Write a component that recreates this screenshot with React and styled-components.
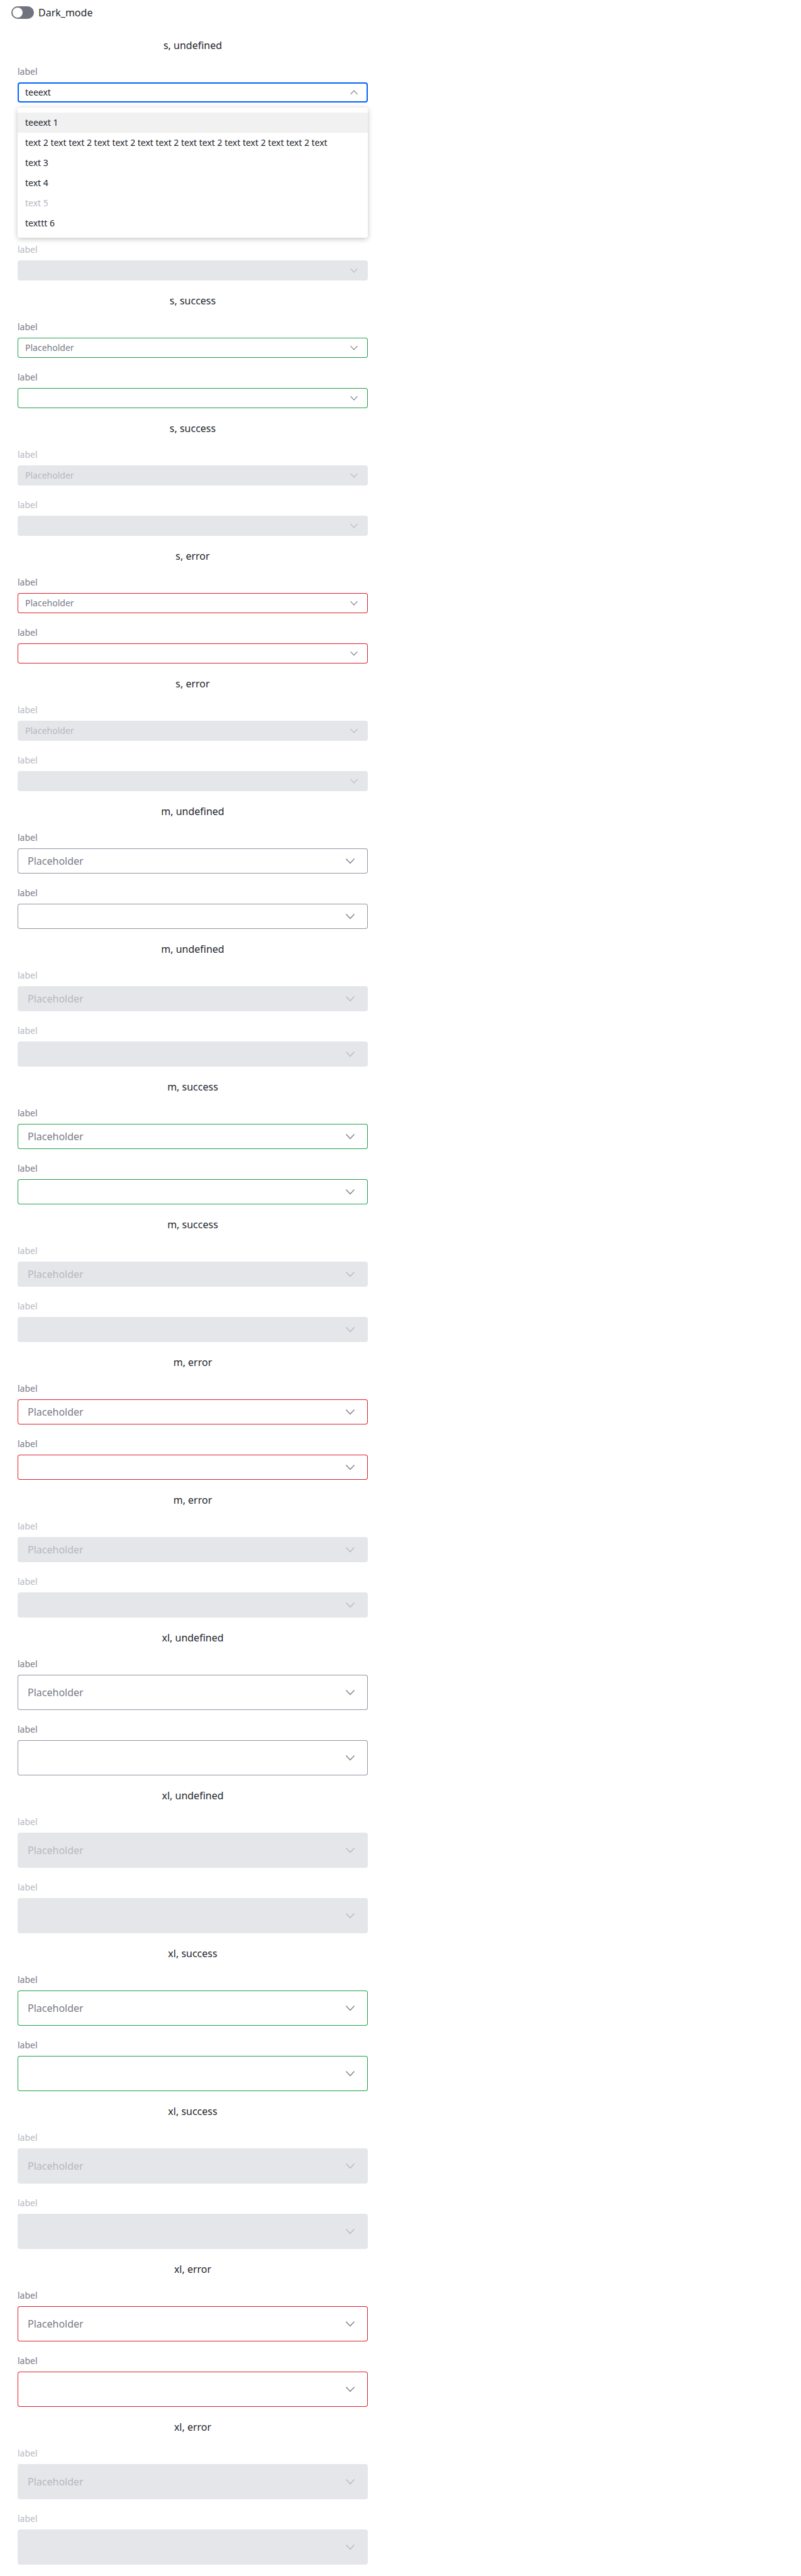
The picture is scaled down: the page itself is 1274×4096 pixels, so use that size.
import React, { useId, useState } from "react";
import styled, { createGlobalStyle, css } from "styled-components";

const fontStack = '"Noto Sans", "Noto Sans CJK JP", sans-serif';

const GlobalStyle = createGlobalStyle`
  *, *::before, *::after { box-sizing: border-box; }
  body {
    margin: 0;
    background: #fff;
    color: #23262d;
    font-family: ${fontStack};
    font-size: 16px;
  }
`;

const sizes = {
  s: { height: 32, font: 14, pad: 12, icon: 20 },
  m: { height: 40, font: 16, pad: 16, icon: 24 },
  xl: { height: 56, font: 16, pad: 16, icon: 24 },
};

const borders = {
  undefined: "#9494a3",
  success: "#1fa04b",
  error: "#dc1f26",
};

const Page = styled.main`
  padding-bottom: 18px;
`;

const Toolbar = styled.header`
  display: flex;
  align-items: center;
  height: 40px;
  padding: 0 18px;
`;

const ToggleLabel = styled.label`
  display: flex;
  align-items: center;
  gap: 7px;
  line-height: 20px;
  cursor: pointer;
`;

const Toggle = styled.input`
  appearance: none;
  display: flex;
  align-items: center;
  width: 36px;
  height: 20px;
  margin: 0;
  padding: 2px;
  border-radius: 10px;
  background: #71747f;
  cursor: pointer;

  &::before {
    content: "";
    width: 16px;
    height: 16px;
    border-radius: 50%;
    background: #fff;
  }

  &:checked {
    justify-content: flex-end;
    background: #0062ff;
  }
`;

const Gallery = styled.div`
  display: flex;
  flex-direction: column;
  gap: 20px;
  max-width: 613px;
  padding: 20px 28px 0;
`;

const Group = styled.section`
  display: flex;
  flex-direction: column;
  gap: 20px;
`;

const GroupTitle = styled.h2`
  margin: 0;
  padding-top: 2px;
  font-size: 16px;
  font-weight: 400;
  line-height: 21px;
  text-align: center;
`;

const Field = styled.div`
  display: flex;
  flex-direction: column;
  gap: 6px;
`;

const FieldLabel = styled.label`
  font-size: 14px;
  line-height: 22px;
  color: ${(p) => (p.$disabled ? "#b5b8c2" : "#787b86")};
`;

const Anchor = styled.div`
  position: relative;
`;

const Control = styled.div`
  display: flex;
  align-items: center;
  height: ${(p) => sizes[p.$size].height}px;
  padding: 0 ${(p) => sizes[p.$size].pad}px;
  border-radius: 4px;
  background: #fff;
  color: #787b86;
  box-shadow: inset 0 0 0 1px ${(p) => borders[p.$status]};

  ${(p) => p.$open && css`
    box-shadow: inset 0 0 0 2px #0062ff;
  `}

  ${(p) => p.$disabled && css`
    background: #e5e6ea;
    color: #b5b8c0;
    box-shadow: none;
  `}
`;

const TextBox = styled.input`
  flex: 1;
  min-width: 0;
  height: 24px;
  padding: 0;
  border: 0;
  outline: 0;
  background: transparent;
  color: #23262d;
  font-family: inherit;
  font-size: ${(p) => sizes[p.$size].font}px;
  line-height: 24px;

  &::placeholder {
    color: #787b86;
    opacity: 1;
  }

  &:disabled::placeholder {
    color: #b5b8c0;
  }
`;

const Chevron = styled.svg`
  flex: none;
  width: ${(p) => sizes[p.$size].icon}px;
  height: ${(p) => sizes[p.$size].icon}px;
  fill: none;
  stroke: currentColor;
`;

const Menu = styled.ul`
  position: absolute;
  z-index: 1;
  top: calc(100% + 8px);
  left: 0;
  right: 0;
  margin: 0;
  padding: 8px 0 7px;
  list-style: none;
  border-radius: 4px;
  background: #fff;
  box-shadow: 0 2px 8px rgba(0, 0, 0, 0.24);
`;

const Option = styled.li`
  padding: 0 12px;
  font-size: 14px;
  line-height: 32px;
  background: ${(p) => (p.$active ? "#f1f1f1" : "transparent")};
  color: ${(p) => (p.$disabled ? "#b5b8c0" : "#23262d")};
`;

const options = [
  { text: "teeext 1", active: true },
  { text: "text 2 text text 2 text text 2 text text 2 text text 2 text text 2 text text 2 text" },
  { text: "text 3" },
  { text: "text 4" },
  { text: "text 5", disabled: true },
  { text: "texttt 6" },
];

function ComboBox({ size, status, disabled, placeholder, initial = "", open }) {
  const id = useId();
  const [value, setValue] = useState(initial);
  return (
    <Field>
      <FieldLabel htmlFor={id} $disabled={disabled}>label</FieldLabel>
      <Anchor>
        <Control $size={size} $status={status} $disabled={disabled} $open={open}>
          <TextBox
            id={id}
            type="text"
            role="combobox"
            aria-expanded={Boolean(open)}
            aria-controls={`${id}-menu`}
            autoComplete="off"
            $size={size}
            disabled={disabled}
            placeholder={placeholder}
            value={value}
            onChange={(e) => setValue(e.target.value)}
          />
          <Chevron $size={size} viewBox="0 0 24 24" aria-hidden="true">
            <path d={open ? "M5.5 15.5 12 8.5l6.5 7" : "M5.5 8.5 12 15.5l6.5-7"} strokeWidth="1.3" />
          </Chevron>
        </Control>
        {open && (
          <Menu id={`${id}-menu`} role="listbox">
            {options.map((o) => (
              <Option
                key={o.text}
                role="option"
                aria-selected={Boolean(o.active)}
                aria-disabled={Boolean(o.disabled)}
                $active={o.active}
                $disabled={o.disabled}
              >
                {o.text}
              </Option>
            ))}
          </Menu>
        )}
      </Anchor>
    </Field>
  );
}

const groups = ["s", "m", "xl"].flatMap((size) =>
  ["undefined", "success", "error"].flatMap((status) =>
    [false, true].map((disabled) => ({ size, status, disabled }))
  )
);

export default function App() {
  return (
    <Page>
      <GlobalStyle />
      <Toolbar>
        <ToggleLabel>
          <Toggle type="checkbox" role="switch" />
          Dark_mode
        </ToggleLabel>
      </Toolbar>
      <Gallery>
        {groups.map((g, i) => (
          <Group key={i}>
            <GroupTitle>{`${g.size}, ${g.status}`}</GroupTitle>
            <ComboBox {...g} placeholder="Placeholder" initial={i === 0 ? "teeext" : ""} open={i === 0} />
            <ComboBox {...g} />
          </Group>
        ))}
      </Gallery>
    </Page>
  );
}
